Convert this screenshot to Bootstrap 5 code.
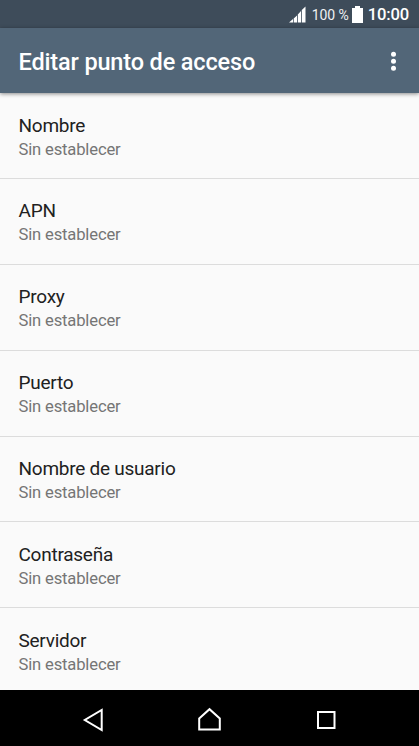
<!DOCTYPE html>
<html lang="es">
<head>
<meta charset="utf-8">
<meta name="viewport" content="width=device-width, initial-scale=1">
<title>Editar punto de acceso</title>
<link href="https://cdn.jsdelivr.net/npm/bootstrap@5.3.0/dist/css/bootstrap.min.css" rel="stylesheet">
<style>
body{font-family:Roboto,"Noto Sans",sans-serif;width:419px;height:746px;background:#fafafa;overflow:hidden}
.status-bar{height:28px;background:#3e4c5a;color:#fff;padding-right:10px}
.pct{font-size:14px;line-height:28px;letter-spacing:-.1px;margin:1px 3px 0 6px;color:#eef1f3}
.clock{font-size:16.6px;font-weight:500;line-height:28px;letter-spacing:-.15px;margin:2px 0 0 5px}
.app-bar{height:65px;background:#526678;color:#fff;padding:0 18px 0 18.5px;box-shadow:0 1px 4px rgba(0,0,0,.45);z-index:1}
.app-title{font-size:23.5px;font-weight:500;line-height:30px;letter-spacing:-.15px;padding-top:2px}
.settings{height:597px}
.setting{height:85.9px;padding:20.5px 18.5px 0;border-bottom:1px solid #dcdcdc;flex-shrink:0}
.label{font-size:19px;line-height:24px;letter-spacing:-.25px;color:#212121}
.value{font-size:16.6px;line-height:24px;letter-spacing:-.16px;color:#757575}
.sys-nav{height:56px;background:#000}
</style>
</head>
<body class="d-flex flex-column">
<div class="status-bar d-flex align-items-center justify-content-end flex-shrink-0">
<svg width="17" height="17" viewBox="0 0 17 17" fill="#fff"><path d="M0 16.500L4 13V16.500zM4.700 12.500L8 9.500V16.500H4.700zM8.800 8.500L12 5V16.500H8.800zM12.800 4L16.500 .5V16.500H12.800z"/></svg>
<span class="pct">100 %</span>
<svg width="11" height="17" viewBox="0 0 11 17" fill="#fff"><path d="M3 0H8V2H11V17H0V2H3z"/></svg>
<span class="clock">10:00</span>
</div>
<header class="app-bar d-flex align-items-center justify-content-between position-relative flex-shrink-0">
<h1 class="app-title m-0">Editar punto de acceso</h1>
<svg width="14" height="20" viewBox="0 0 14 20" fill="#fff"><circle cx="6.500" cy="3.200" r="2.500"/><circle cx="6.500" cy="10.200" r="2.500"/><circle cx="6.500" cy="17.200" r="2.500"/></svg>
</header>
<main class="settings d-flex flex-column overflow-hidden flex-shrink-0">
<div class="setting"><div class="label">Nombre</div><div class="value">Sin establecer</div></div>
<div class="setting"><div class="label">APN</div><div class="value">Sin establecer</div></div>
<div class="setting"><div class="label">Proxy</div><div class="value">Sin establecer</div></div>
<div class="setting"><div class="label">Puerto</div><div class="value">Sin establecer</div></div>
<div class="setting"><div class="label">Nombre de usuario</div><div class="value">Sin establecer</div></div>
<div class="setting"><div class="label">Contraseña</div><div class="value">Sin establecer</div></div>
<div class="setting"><div class="label">Servidor</div><div class="value">Sin establecer</div></div>
</main>
<nav class="sys-nav d-flex justify-content-center align-items-center flex-shrink-0">
<svg width="419" height="56" viewBox="0 0 419 56" fill="none" stroke="#fff" stroke-width="2"><path d="M101.700 20V40L84.800 30z"/><path d="M199.200 28.500L209.500 19.200L219.800 28.500V39.500H199.200z"/><path d="M318 22H334.500V38H318z"/></svg>
</nav>
<script src="https://cdn.jsdelivr.net/npm/bootstrap@5.3.0/dist/js/bootstrap.bundle.min.js"></script>
</body>
</html>
